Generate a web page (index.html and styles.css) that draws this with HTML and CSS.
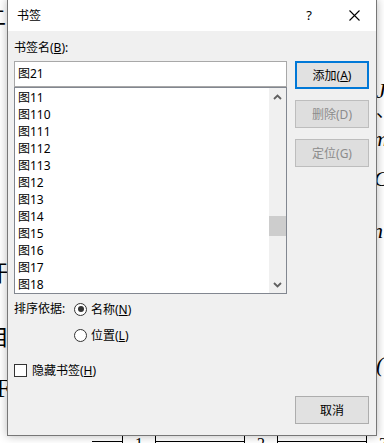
FILE: index.html
```html
<!DOCTYPE html>
<html lang="zh-CN">
<head>
<meta charset="utf-8">
<title>书签</title>
<link rel="stylesheet" href="styles.css">
</head>
<body>
<div class="doc">
  <span class="frag f1">二</span>
  <span class="frag f2">汗</span>
  <span class="frag f3">目</span>
  <span class="frag f5">F</span>
  <span class="frag f6">J</span>
  <span class="frag f7">、</span>
  <span class="frag f8">m</span>
  <span class="frag f9">C</span>
  <span class="frag f10">n</span>
  <span class="frag f11">(</span>
  <div class="flow">
    <span class="arrow-line w1"></span><span class="cell">1</span>
    <span class="arrow-line w2"></span><span class="cell">2</span>
    <span class="arrow-line w2"></span><span class="cell">3</span>
  </div>
</div>

<div class="dialog">
  <div class="titlebar">
    <span class="title">书签</span>
    <span class="help">?</span>
    <span class="close">
      <svg width="11" height="11" viewBox="0 0 11 11"><path d="M0.5 0.5 L10.5 10.5 M10.5 0.5 L0.5 10.5" stroke="#000" stroke-width="1.1" fill="none"/></svg>
    </span>
  </div>
  <div class="body">
    <label class="field-label">书签名(<u>B</u>):</label>
    <div class="main">
      <div class="left">
        <div class="input">图21</div>
        <div class="list">
          <ul class="items">
            <li>图11</li>
            <li>图110</li>
            <li>图111</li>
            <li>图112</li>
            <li>图113</li>
            <li>图12</li>
            <li>图13</li>
            <li>图14</li>
            <li>图15</li>
            <li>图16</li>
            <li>图17</li>
            <li>图18</li>
          </ul>
          <div class="scrollbar">
            <span class="sb-btn">
              <svg width="9" height="6" viewBox="0 0 9 6"><path d="M1 5 L4.5 1.5 L8 5" stroke="#606060" stroke-width="1.8" fill="none"/></svg>
            </span>
            <span class="track"><span class="thumb"></span></span>
            <span class="sb-btn">
              <svg width="9" height="6" viewBox="0 0 9 6"><path d="M1 1 L4.5 4.5 L8 1" stroke="#606060" stroke-width="1.8" fill="none"/></svg>
            </span>
          </div>
        </div>
      </div>
      <div class="buttons">
        <button class="btn default">添加(<u>A</u>)</button>
        <button class="btn" disabled>删除(D)</button>
        <button class="btn" disabled>定位(G)</button>
      </div>
    </div>
    <div class="sort">
      <span class="sort-label">排序依据:</span>
      <div class="sort-options">
        <span class="option"><span class="radio checked"></span><span>名称(<u>N</u>)</span></span>
        <span class="option"><span class="radio"></span><span>位置(<u>L</u>)</span></span>
      </div>
    </div>
    <div class="check-row">
      <span class="checkbox"></span><span>隐藏书签(<u>H</u>)</span>
    </div>
    <div class="footer">
      <button class="btn">取消</button>
    </div>
  </div>
</div>
</body>
</html>
```
FILE: styles.css
```css
html, body {
  margin: 0;
  padding: 0;
}
body {
  width: 384px;
  height: 443px;
  overflow: hidden;
  background: #fff;
  position: relative;
  font-family: "Noto Sans", "Noto Sans CJK SC", sans-serif;
  font-size: 12px;
}

/* document behind the dialog */
.doc {
  position: absolute;
  inset: 0;
  font-family: "Liberation Serif", "Noto Sans CJK SC", serif;
  color: #000;
}
.frag {
  position: absolute;
  font-size: 22px;
  line-height: 1;
}
.f1 { left: -14px; top: 8px; font-size: 20px; }
.f2 { left: -14px; top: 263px; }
.f3 { left: -13px; top: 327px; }
.f5 { left: -4px; top: 376px; font-size: 26px; }
.f6 { left: 376px; top: 80px; font-style: italic; }
.f7 { left: 376px; top: 102px; font-size: 18px; }
.f8 { left: 372px; top: 128px; font-style: italic; }
.f9 { left: 374px; top: 168px; font-style: italic; }
.f10 { left: 372px; top: 220px; font-style: italic; }
.f11 { left: 376px; top: 354px; font-style: italic; }
.flow {
  position: absolute;
  left: 92px;
  top: 436px;
  display: flex;
  align-items: flex-start;
  font-size: 16px;
  line-height: 16px;
}
.arrow-line {
  height: 6px;
  border-top: 1px solid #000;
  margin-top: 5px;
}
.w1 { width: 30px; }
.w2 { width: 88px; }
.cell {
  width: 32px;
  height: 20px;
  border-left: 1px solid #000;
  border-right: 1px solid #000;
  text-align: center;
}

/* dialog */
.dialog {
  position: absolute;
  left: 7px;
  top: -1px;
  width: 370px;
  height: 437px;
  box-sizing: border-box;
  border: 1px solid #777;
  background: #f0f0f0;
  box-shadow: 0 0 9px rgba(0, 0, 0, 0.28);
  color: #000;
}
.titlebar {
  height: 31px;
  background: #fff;
  display: flex;
  align-items: center;
}
.title {
  flex: 1;
  padding-left: 9px;
  line-height: 31px;
}
.help {
  width: 36px;
  text-align: center;
  margin-right: 5px;
  font-size: 13px;
  line-height: 31px;
}
.close {
  width: 44px;
  height: 31px;
  display: flex;
  align-items: center;
  justify-content: center;
}
.body {
  padding: 8px 7px 0 6px;
}
.field-label {
  display: block;
  height: 18px;
  line-height: 18px;
  margin-bottom: 4px;
}
.main {
  display: flex;
  gap: 8px;
  align-items: flex-start;
}
.left {
  width: 273px;
}
.input {
  height: 26px;
  box-sizing: border-box;
  border: 1px solid #a8a8a8;
  background: #fff;
  padding-left: 3px;
  line-height: 24px;
}
.list {
  height: 207px;
  box-sizing: border-box;
  border: 1px solid #828790;
  background: #fff;
  display: flex;
  overflow: hidden;
}
.items {
  flex: 1;
  list-style: none;
  margin: 0;
  padding: 1px 0 0 3px;
}
.items li {
  height: 17px;
  line-height: 17px;
}
.scrollbar {
  width: 17px;
  background: #f0f0f0;
  display: flex;
  flex-direction: column;
}
.sb-btn {
  height: 17px;
  display: flex;
  align-items: center;
  justify-content: center;
}
.track {
  flex: 1;
  display: flex;
  flex-direction: column;
}
.thumb {
  margin-top: 111px;
  height: 20px;
  background: #cdcdcd;
}
.buttons {
  width: 74px;
  display: flex;
  flex-direction: column;
  gap: 11px;
}
.btn {
  width: 74px;
  height: 28px;
  box-sizing: border-box;
  border: 1px solid #adadad;
  background: #e1e1e1;
  font: inherit;
  color: #000;
  padding: 0;
  margin: 0;
}
.btn.default {
  border: 2px solid #0078d7;
}
.btn:disabled {
  color: #8c8c8c;
  background: #dedede;
  border-color: #bdbdbd;
}
.sort {
  margin-top: 6px;
  display: flex;
}
.sort-label {
  width: 60px;
  line-height: 18px;
}
.sort-options {
  display: flex;
  flex-direction: column;
  gap: 8px;
}
.option {
  display: flex;
  align-items: center;
  gap: 4px;
  height: 18px;
}
.radio {
  width: 13px;
  height: 13px;
  box-sizing: border-box;
  border: 1px solid #333;
  border-radius: 50%;
  background: #fff;
  display: flex;
  align-items: center;
  justify-content: center;
}
.radio.checked::after {
  content: "";
  width: 6px;
  height: 6px;
  border-radius: 50%;
  background: #333;
}
.check-row {
  margin-top: 17px;
  height: 18px;
  display: flex;
  align-items: center;
  gap: 5px;
}
.checkbox {
  width: 13px;
  height: 13px;
  box-sizing: border-box;
  border: 1px solid #333;
  background: #fff;
}
.footer {
  margin-top: 17px;
  display: flex;
  justify-content: flex-end;
}
```
